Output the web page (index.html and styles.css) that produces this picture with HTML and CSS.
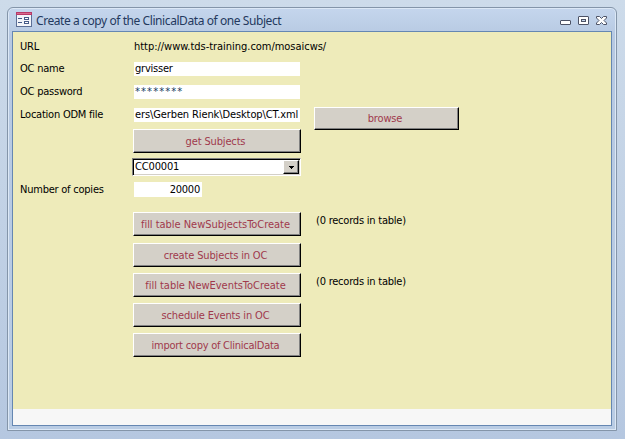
FILE: index.html
```html
<!DOCTYPE html>
<html lang="en">
<head>
<meta charset="utf-8">
<title>Create a copy of the ClinicalData of one Subject</title>
<link rel="stylesheet" href="styles.css">
</head>
<body>
<main class="window">
  <header class="titlebar">
    <svg class="form-icon" width="16" height="15" viewBox="0 0 16 15" shape-rendering="crispEdges">
      <rect width="16" height="15" fill="#5c6f96"/>
      <rect x="1" y="3" width="14" height="11" fill="#f3f5fa"/>
      <rect width="16" height="3" fill="#b83a68"/>
      <rect x="1" y="1" width="14" height="1" fill="#d8698c"/>
      <path d="M2 6.500h4M2 10.500h4" stroke="#465b88"/>
      <path d="M8.500 5.500h4v2h-4zM8.500 9.500h4v2h-4z" fill="#fff" stroke="#465b88"/>
    </svg>
    <h1 class="title">Create a copy of the ClinicalData of one Subject</h1>
    <svg class="controls" width="50" height="12" viewBox="0 0 50 12">
      <rect x="1.500" y="5.500" width="10" height="4" rx=".5" fill="#fff" stroke="#4d5366"/>
      <rect x="19.500" y="1.500" width="10" height="8" rx=".5" fill="#fff" stroke="#4d5366"/>
      <rect x="22.500" y="4.500" width="4" height="2" fill="#c6d6ec" stroke="#4d5366"/>
      <path d="M37.500 1.500h3l2 2 2-2h3v1.500l-2.500 2.500 2.500 2.500v1.500h-3l-2-2-2 2h-3v-1.500l2.500-2.500-2.500-2.500z" fill="#fff" stroke="#4d5366"/>
    </svg>
  </header>
  <section class="panel">
    <div class="form">
      <div class="label first">URL</div><div class="value url">http://www.tds-training.com/mosaicws/</div><div></div>
      <div class="label">OC name</div><div class="field">grvisser</div><div></div>
      <div class="label">OC password</div><div class="field password">********</div><div></div>
      <div class="label">Location ODM file</div><div class="field path">ers\Gerben Rienk\Desktop\CT.xml</div><button class="button browse">browse</button>
      <div></div><button class="button">get Subjects</button><div></div>
      <div></div>
      <div class="combo"><span class="combo-text">CC00001</span><span class="arrow"><svg width="5" height="3" viewBox="0 0 5 3" shape-rendering="crispEdges"><path d="M0 0h5v1H0zM1 1h3v1H1zM2 2h1v1H2z"/></svg></span></div><div></div>
      <div class="label copies">Number of copies</div><div class="field number">20000</div><div></div>
      <div></div><button class="button fill">fill table NewSubjectsToCreate</button><div class="note">(0 records in table)</div>
      <div></div><button class="button">create Subjects in OC</button><div></div>
      <div></div><button class="button fill">fill table NewEventsToCreate</button><div class="note">(0 records in table)</div>
      <div></div><button class="button">schedule Events in OC</button><div></div>
      <div></div><button class="button import">import copy of ClinicalData</button><div></div>
    </div>
    <footer class="footer"></footer>
  </section>
</main>
</body>
</html>
```
FILE: styles.css
```css
* { box-sizing: border-box; }
body {
  margin: 0;
  height: 439px;
  padding: 7px 8px 8px 7px;
  background: linear-gradient(#cddbea, #b5c7e0);
  overflow: hidden;
  font: 11px/14px "DejaVu Sans Condensed", "DejaVu Sans", sans-serif;
  font-stretch: condensed;
  letter-spacing: -0.23px;
  color: #000;
}
.window {
  display: flex;
  flex-direction: column;
  height: 424px;
  border: 1px solid #8495a9;
  border-radius: 6px 6px 0 0;
  padding: 0 4px 4px;
  background: linear-gradient(#c5d6ed, #b7c9e2 28px, #b9cce4);
  box-shadow: inset 0 0 0 1px #dce8f6;
}
.titlebar {
  display: flex;
  flex: 0 0 23px;
  align-items: center;
  padding: 2px 3px 0 4px;
}
.form-icon { margin-top: -2px; }
.title {
  flex: 1;
  margin: 0 0 0 4px;
  font: 12px/16px "Noto Sans", sans-serif;
  letter-spacing: -0.42px;
  color: #24395e;
  white-space: nowrap;
}
.panel {
  display: flex;
  flex: 1;
  flex-direction: column;
  border: 1px solid #6587b2;
}
.form {
  display: grid;
  flex: 1;
  grid-template-columns: 113px 181px 1fr;
  grid-template-rows: 24px 23px 23px 21px 29px 24px 30px 31px 30px 30px 30px 30px;
  align-items: start;
  padding: 6px 0 0 7px;
  background: #eeebba;
  white-space: nowrap;
}
.footer { flex: 0 0 16px; background: #f7f7f7; }
.first { margin-top: 2px; }
.copies { margin-top: 1px; }
.url { margin-top: 2px; margin-left: 1px; letter-spacing: -0.03px; }
.field {
  width: 166px;
  height: 14px;
  margin-left: 1px;
  padding: 0 1px;
  background: #fff;
}
.path { overflow: hidden; letter-spacing: -0.11px; }
.password { color: #123c5e; letter-spacing: 1.1px; }
.number { width: 68px; height: 15px; padding: 1px 2px; text-align: right; }
.button {
  width: 168px;
  height: 24px;
  padding: 1px 3px 0 0;
  border: 1px solid;
  border-color: #fff #000 #000 #fff;
  border-radius: 0;
  background: #d4d0c8;
  box-shadow: inset -1px -1px #808080;
  color: #a0394c;
  font: inherit;
  letter-spacing: -0.15px;
}
.fill { letter-spacing: -0.03px; }
.import { letter-spacing: -0.25px; }
.browse { width: 145px; height: 23px; margin-top: -1px; padding: 0 3px 0 0; }
.combo {
  display: flex;
  width: 169px;
  height: 18px;
  margin-left: -1px;
  border: 1px solid;
  border-color: #808080 #fff #fff #808080;
  box-shadow: inset 1px 1px #000, inset -1px -1px #d4d0c8;
  background: #fff;
  padding: 1px;
}
.combo-text { flex: 1; padding-left: 1px; letter-spacing: -0.15px; }
.arrow {
  display: flex;
  align-items: center;
  justify-content: center;
  width: 16px;
  border: 1px solid;
  border-color: #fff #000 #000 #fff;
  box-shadow: inset -1px -1px #808080;
  background: #d4d0c8;
}
.note { margin: 2px 0 0 2px; letter-spacing: -0.22px; }
```
